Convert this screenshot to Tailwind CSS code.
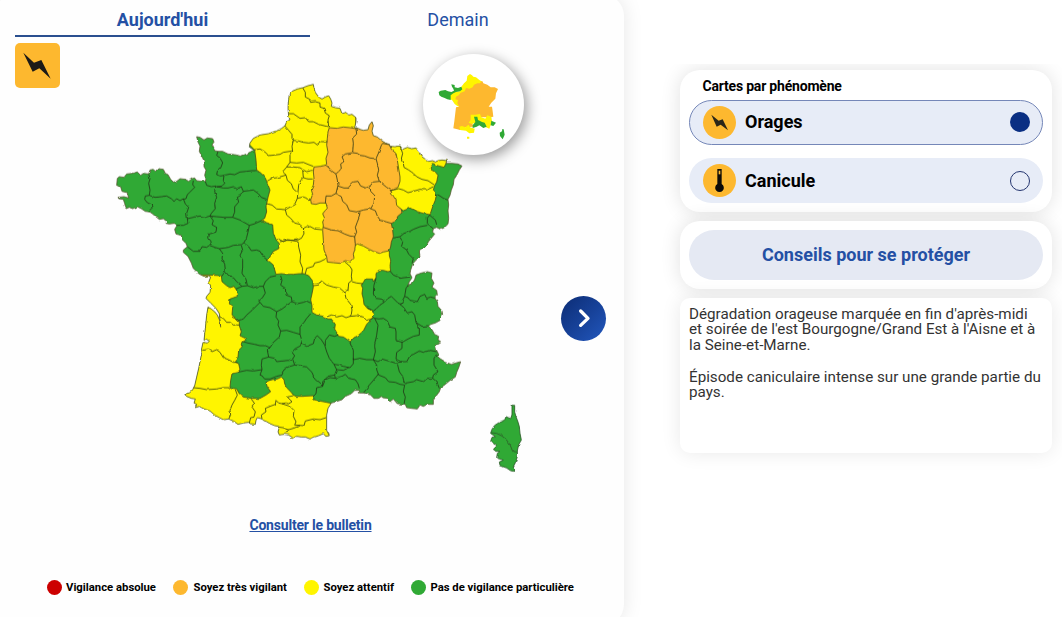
<!DOCTYPE html>
<html lang="fr">
<head>
    <meta charset="UTF-8">
    <meta name="viewport" content="width=device-width, initial-scale=1.0">
    <title>Vigilance météo</title>
    <script src="https://cdn.jsdelivr.net/npm/@tailwindcss/browser@4"></script>
</head>
<body class="flex h-[617px] items-start overflow-hidden bg-white font-[Roboto,sans-serif] text-black">

    <!-- Map card -->
    <section class="relative -mt-1.5 -ml-1.5 flex h-[632px] w-[630px] shrink-0 flex-col rounded-[22px] bg-[#fefefe] pt-1.5 pr-[18px] pl-[21px] shadow-[0_0_20px_rgba(0,0,0,0.1)]">
        <div class="flex h-[37px] text-lg leading-[39px] text-[#2450a4]">
            <button class="w-[295px] border-b-2 border-[#2a4f8f] text-center font-bold">Aujourd'hui</button>
            <button class="w-[296px] text-center">Demain</button>
        </div>

        <div class="mt-1.5 flex h-[462px] items-start">
            <span class="size-[45px] shrink-0 rounded-[5px] bg-[#fdb82f]">
                <svg class="size-full" viewBox="0 0 135 135"><path d="M25 29 57 59 79 51 107 107 73 76 53 86Z" fill="#1c1a17"/></svg>
            </span>
            <svg class="mt-8 ml-10 h-[405px] w-[440px] shrink-0" viewBox="0 0 1320 1215" fill="none" stroke-linejoin="round">
                <defs>
                    <!-- roughens coasts and borders a little -->
                    <filter id="rough" filterUnits="userSpaceOnUse" x="0" y="0" width="1320" height="1215" color-interpolation-filters="sRGB">
                        <feTurbulence type="fractalNoise" baseFrequency="0.06" numOctaves="1" seed="4"/>
                        <feDisplacementMap in="SourceGraphic" scale="8" xChannelSelector="R" yChannelSelector="G"/>
                    </filter>
                    <path id="france" d="M52 310 58 305 72 307 80 297 96 295 112 291 122 301 130 295 146 297 150 285 160 283 166 289 174 281 190 283 196 295 204 299 212 313 220 321 230 319 240 311 256 313 266 319 276 311 284 309 290 317 304 319 316 319 318 311 314 301 318 285 312 275 312 257 306 245 298 229 300 213 294 201 290 185 300 187 312 195 322 189 338 191 342 201 336 209 344 227 354 229 368 229 384 237 404 239 424 243 440 237 458 227 464 225 462 225 448 216 450 204 460 190 480 180 505 176 530 168 545 160 555 152 560 140 570 134 566 124 564 100 565 80 568 58 578 48 592 42 608 38 624 32 640 28 642 40 646 52 656 66 666 72 676 66 686 62 692 72 696 84 694 94 706 98 720 100 726 116 738 112 746 120 756 118 768 128 768 140 764 158 776 162 790 166 804 164 808 150 816 140 820 152 816 168 820 182 832 186 844 196 856 204 868 208 870 214 885 215 900 213 908 223 922 217 935 221 948 219 958 231 964 243 976 253 986 259 998 257 1006 261 1014 257 1026 255 1040 257 1038 265 1056 265 1074 267 1086 273 1078 285 1070 301 1062 313 1060 329 1054 345 1050 361 1044 373 1046 389 1044 407 1046 429 1044 447 1034 457 1022 463 1010 457 1000 461 998 471 1004 477 996 487 986 499 978 513 966 523 958 529 960 545 946 557 938 567 932 585 930 596 936 608 928 620 924 630 936 626 944 614 948 600 964 594 982 590 996 594 994 610 1002 624 996 636 1010 646 1012 660 1004 668 1012 680 1014 694 1026 708 1028 720 1020 736 1006 744 992 748 986 754 996 764 1004 778 1016 784 1014 794 1022 800 1006 810 1010 826 1016 838 1010 842 1022 852 1038 862 1054 868 1074 862 1082 860 1076 878 1070 892 1066 906 1050 916 1036 928 1022 938 1018 950 1006 966 1000 976 1000 988 982 988 970 994 960 990 952 1002 934 1000 920 998 916 988 892 986 880 972 870 980 862 970 848 968 844 964 836 970 822 970 812 960 798 956 790 954 778 954 778 946 764 946 754 956 736 964 726 974 708 980 694 984 684 1000 680 1020 680 1040 680 1066 688 1082 678 1084 670 1076 656 1082 644 1086 630 1092 616 1086 604 1086 590 1084 580 1090 566 1080 552 1078 538 1080 534 1070 538 1058 536 1054 524 1052 510 1046 500 1040 490 1036 486 1032 472 1028 468 1036 466 1048 450 1046 446 1042 430 1044 414 1048 400 1038 386 1032 370 1034 358 1028 344 1020 330 1008 312 1002 298 994 286 998 290 988 282 984 286 972 274 970 260 964 254 958 268 954 278 944 284 932 296 880 306 830 312 802 322 804 328 798 318 792 312 796 316 760 320 720 324 696 334 702 344 710 352 720 360 738 362 756 360 738 358 716 348 700 332 684 318 670 320 664 330 652 332 632 326 622 332 606 324 602 312 604 296 596 280 580 274 564 264 544 250 532 250 525 262 515 258 505 246 493 244 481 228 477 224 463 230 453 222 445 208 447 198 445 200 439 190 431 178 433 168 425 158 417 150 411 136 409 124 401 112 395 98 401 88 397 78 401 74 385 70 373 56 371 54 367 72 365 86 369 82 353 66 349 62 335 50 331Z"/>
                    <clipPath id="coast"><use href="#france"/></clipPath>
                </defs>
                <g filter="url(#rough)">
                    <use href="#france" fill="#30a935"/>
                    <!-- vigilance zones -->
                    <g clip-path="url(#coast)" stroke="#4a4a16" stroke-width="2.4">
                        <path fill="#fff500" d="M464 225 468 255 470 285 484 295 496 309 500 319 510 345 504 367 498 395 500 410 494 430 484 437 500 443 518 449 520 475 530 497 538 505 536 521 520 529 510 545 504 556 520 570 528 598 544 596 560 598 580 598 598 596 612 596 626 602 638 618 640 636 636 656 632 674 636 692 636 712 650 720 670 724 684 732 694 732 706 748 704 762 712 776 716 784 730 786 742 794 750 800 762 788 774 782 790 768 800 748 818 728 824 718 814 706 802 700 792 688 790 672 786 656 788 640 784 630 790 622 796 612 818 612 820 620 828 608 828 596 836 586 850 586 864 590 872 588 870 574 872 556 868 542 868 526 768 300 768 100 640 0 540 20 420 180Z"/>
                        <path fill="#fff500" d="M870 190 1040 240 1040 262 1032 277 1010 271 998 265 990 275 994 285 1006 291 1014 301 1010 321 1004 331 1000 345 1010 355 1006 375 998 395 990 419 970 415 950 409 930 399 910 407 904 403 860 380 860 300Z"/>
                        <path fill="#fff500" d="M326 600 364 602 366 620 380 632 390 638 402 634 410 646 412 664 390 672 388 686 398 696 396 720 410 732 418 742 418 752 424 770 420 782 440 792 428 802 426 816 416 826 414 846 404 860 416 866 420 884 412 892 396 896 392 916 390 936 400 940 410 942 418 956 430 966 454 970 480 970 498 960 512 950 502 936 498 922 516 914 532 912 544 906 552 914 554 926 560 938 574 952 580 960 588 964 606 964 640 962 642 974 660 978 680 982 700 986 720 1120 220 1120 220 900 300 600Z"/>
                        <path fill="#fdb82f" d="M688 158 710 160 730 156 750 158 768 161 770 100 850 130 870 213 874 223 888 235 892 255 896 281 900 305 900 319 894 337 872 347 880 363 888 375 890 391 904 403 906 413 892 425 892 437 874 445 878 465 880 485 874 501 872 515 868 527 850 531 838 535 820 529 808 523 790 513 772 507 766 511 764 525 760 537 762 549 752 561 736 557 720 565 700 563 682 561 680 545 672 525 670 495 668 465 670 452 668 440 674 430 668 416 676 406 682 400 678 384 660 384 648 388 634 386 632 374 638 358 634 344 640 330 642 310 640 290 642 276 660 274 676 270 680 268 678 250 684 232 680 210 682 190 684 170Z"/>
                    </g>
                    <!-- department borders -->
                    <g stroke="#1f2d14" stroke-opacity=".8" stroke-width="2.8">
                        <path transform="translate(0 105)" d="M146 192 150 206 146 220 150 240 148 256 136 258 134 268 142 278 154 284 156 294 148 302M148 256 165 262 185 260 200 258 214 266 222 274 230 266 240 272 250 266 256 282 266 292 260 310 262 326 264 340 250 346 230 346M280 212 278 224 284 232 270 246 262 254 258 266 250 268M316 214 320 226 334 230 348 228 344 244 350 262 344 280 346 296 334 310 330 318 316 322 300 318 280 322 262 326M354 124 350 136 360 144 368 158 362 174 352 184 350 194 362 198 372 196 370 210 374 220 366 228 350 230 370 234 384 234 400 230 410 236 424 230 430 244 444 242 460 240 474 250 484 262 500 268M372 196 390 192 404 194 420 186 440 184 456 182 470 182M430 244 422 256 412 262 416 276 404 290 404 306 398 322 372 322 350 320 330 318 340 332 336 344 350 352 348 366 328 372 326 384 334 396 328 406 320 412 306 410 300 424 280 424 262 410M398 322 420 330 434 338 448 346 462 342 484 332M328 406 345 412 358 416 385 412 400 406 424 404 432 398 440 382 444 366 448 346M358 416 368 430 366 446 374 462 376 480 374 486 366 498M424 406 428 420 420 436 428 450 428 470 426 490 438 508 442 526M432 400 446 410 454 422 470 420 480 424 490 440 504 452"/>
                        <path transform="translate(240 480)" d="M134 108 150 126 160 128 172 142 186 154 202 152 220 158 236 154 250 154 256 140 270 126 288 122M168 162 186 154M156 246 176 256 190 252 200 240 216 226 230 212 240 202 236 198 246 190 256 174 250 154M302 122 306 136 302 150 316 160 318 180 334 186 336 200 322 210 306 222 290 230 270 218 250 214 240 202M336 200 352 206 370 202 380 198 392 204M290 230 288 246 296 258 294 270 302 288 320 286 340 292 360 298 360 276 372 262 380 250 392 236M204 324 224 328 240 332 256 332 270 338 280 322 298 306 302 288M204 324 190 320M270 338 262 346 266 366 284 370 290 380 306 378 326 376 338 372 344 362 336 352 344 342 362 332 366 318 360 298M266 366 246 372 244 390 246 404 220 408 200 406 172 412M246 404 240 420 246 422 254 432 270 432 290 424 306 420 312 404 324 396 344 390 360 392 380 396 396 412 404 432 420 446 428 454 410 458 408 476 400 484M338 372 344 390M362 326 380 334 400 326 404 310 412 302 424 314 434 330 440 350 448 370 462 388 470 404 464 420 444 424 428 440 428 454"/>
                        <path transform="translate(240 480)" d="M296 12 310 20 322 14 336 16 354 20 356 36 362 60 360 80 368 100 366 116M376 116 380 100 400 94 404 84 420 80 436 72M400 152 416 150 424 138 440 150 460 156 480 160M118 244 130 250 140 262 150 262 160 270 178 270M70 346 86 342 96 350 110 344 120 352 130 368 146 374 160 382 172 382M40 458 60 460 80 464 110 462 130 458 150 458M166 464 172 480 164 496 156 510 150 526 152 540 146 552M214 492 224 506 216 516 226 530 222 546 212 548 208 564M246 552 244 540 258 530 256 520 270 514 286 508 288 496 296 504 306 506 316 504 326 506 336 500 322 486 340 482M306 506 330 514 342 526 340 544 348 560 344 570 372 572 376 558 400 552 420 554 438 548M298 576 312 578 326 584 340 580 360 572M318 594 326 584"/>
                        <path transform="translate(630 480)" d="M240 108 250 120 264 126 270 130 282 128 300 126M198 130 192 150 190 176 196 190 214 192 222 202 210 210 198 222 190 228 172 218M222 202 234 190 244 184 250 190 264 204 272 208 284 184 288 160 296 148M270 208 280 216 292 234 306 230 314 240 318 262 328 280 328 300 310 304 294 312 276 322 258 316 258 290 256 280 240 276 232 258 220 250 208 252 194 250 188 246M284 184 294 188 300 196 322 200 330 184 344 178 350 190 362 186 376 190M318 262 336 274 356 272M194 250 204 270 200 300 194 330 196 350 190 374 170 374 150 370 130 374 130 346 120 320M46 332 46 316 58 300 74 304 84 300M72 388 86 390 100 394 120 398 130 386 130 370M276 322 276 340 260 352 258 372 270 380 290 380 300 362 310 358 328 348 340 352 360 346 380 350M190 374 204 380 216 372 236 378 256 384 276 380M190 374 200 390 200 404 206 420 226 428 236 440 256 442 270 448 284 450M262 386 268 410 278 424 282 440 288 448M80 404 100 406 116 398M74 420 76 430 96 424 106 418 116 430 136 434 144 446 148 460M206 416 190 436 178 450 170 462 160 474M284 450 280 470 286 486 282 508M288 444 310 440 320 434 340 440 352 430 368 430 370 420 384 410 372 390 372 370 380 358M368 430 380 440 388 460M38 452 46 434 60 428 76 430"/>
                        <path transform="translate(630 480)" d="M104 80 120 94 126 104 124 124 126 136 116 144 114 168 104 172M90 160 104 172 108 190 122 208 126 224 124 238 120 244M54 244 64 240 80 246 96 242 108 248 120 244 140 242 160 246 170 256 188 250M126 140 140 144 158 146"/>
                        <path transform="translate(660 105)" d="M108 56 110 72 98 84 100 100 98 128 112 130 120 136 134 138 150 144 168 146 176 128 184 106 188 100 208 104M168 146 172 160 176 180 172 196 178 214 160 216 150 228 138 234 122 228 114 214 100 216 84 234 72 234 54 228M98 128 76 132 66 140 72 154 62 162 64 176 56 184 48 192 34 182 24 170 14 166M48 192 52 210 54 226 48 250 64 260 68 274 80 284 88 302 110 306 130 300 152 296 162 280 164 256 152 244 150 228M152 296 166 302 172 318 180 330 200 336 214 340M120 306 118 320 112 336 106 352 110 366 104 380 90 378 74 372 54 362 34 360 10 352M104 380 106 406M48 250 34 258 18 258 16 280M178 214 200 232 214 242M240 108 248 130 244 146 250 160 252 172 266 180 280 190 290 200 306 208 324 212 342 224M212 242 236 236 250 240 264 248 280 244 300 238 320 240 340 230M346 250 360 258 372 266 384 270M330 314 322 324 322 340 330 348 340 356M330 316 346 330 350 344M220 384 240 380 252 370 266 366 280 358 300 350 322 346M240 382 248 394 244 408 260 420 266 432 280 446 276 460"/>
                        <path transform="translate(420)" d="M188 38 196 52 196 66 208 72 212 82 226 80 240 84 240 96 252 100 256 114 268 122 264 134 266 156 252 152 236 148 220 140 206 140 196 128 180 130 160 116 146 116M134 152 146 166 156 178 156 190 160 196 176 198 190 202 206 204 222 202 232 210 244 200 262 200M160 196 156 214 158 230 150 240 150 262 170 264 190 262 204 268 220 274M44 224 60 222 74 230 86 242 104 240 120 238 130 232 156 228M150 262 140 276 128 290 138 300 112 308 96 310 82 318M140 276 160 276 180 278 188 284 200 290 218 286M188 284 190 308 204 312 218 312M190 308 182 316 176 330 172 370 190 366 212 374M138 300 142 316 154 326 160 342 170 350M80 386 96 390 110 402 136 404 150 396 164 388 172 370M136 404 140 420 152 430 164 444 180 448 190 460 206 452 224 462 246 464M190 460 192 476 184 490 164 496 140 496 120 500"/>
                    </g>
                    <use href="#france" stroke="#55552f" stroke-width="2.4"/>
                    <g transform="translate(1140 615)" stroke="#2c5a28" stroke-width="2.6">
                        <path fill="#30a935" d="M96 376 104 376 104 396 108 410 114 426 118 440 120 460 124 480 116 494 112 512 112 530 106 548 100 560 102 574 92 572 80 564 60 556 58 546 70 540 50 534 52 520 60 514 48 514 40 508 50 498 40 490 32 484 36 472 46 470 32 460 36 448 44 436 60 426 74 420 78 410 92 416 96 404Z"/>
                        <path d="M32 458 50 460 66 468 78 478 90 494 98 514 110 516"/>
                    </g>
                </g>
            </svg>
        </div>

        <a href="#" class="mt-2.5 self-center text-sm leading-5 font-bold tracking-[-0.2px] text-[#2450a4] underline">Consulter le bulletin</a>

        <ul class="mt-[42px] ml-8 flex items-center text-[11.3px] leading-[21px] font-bold whitespace-nowrap">
            <li class="mr-[17.500px] flex items-center gap-1"><i class="size-[15px] rounded-full bg-[#cc0000]"></i>Vigilance absolue</li>
            <li class="mr-[17.500px] flex items-center gap-[5px]"><i class="size-[15px] rounded-full bg-[#fdb82f]"></i>Soyez très vigilant</li>
            <li class="mr-[17.500px] flex items-center gap-1"><i class="size-[15px] rounded-full bg-[#fff500]"></i>Soyez attentif</li>
            <li class="flex items-center gap-1"><i class="size-[15px] rounded-full bg-[#30a935]"></i>Pas de vigilance particulière</li>
        </ul>

        <!-- Tomorrow preview, floats over the map -->
        <div class="absolute top-[60px] left-[429px] size-[101px] rounded-full bg-white shadow-[3px_4px_14px_rgba(0,0,0,0.4)]">
            <svg class="size-full" viewBox="69 162 303 303">
                <path fill="#fff500" d="M150 282 160 276 180 274 184 260 192 250 200 242 202 228 210 222 216 226 220 230 228 232 238 240 248 246 240 300 180 322 172 318 164 312 156 300 150 298Z"/>
                <path fill="#30a935" d="M116 276 122 272 136 270 144 274 154 276 162 272 160 266 156 260 154 253 164 255 164 262 174 264 184 260 187 268 180 274 168 276 160 280 152 286 152 300 142 298 134 294 124 290 118 286Z"/>
                <path fill="#fdb82f" d="M168 290 176 286 182 278 194 274 198 264 208 266 218 262 222 254 232 250 240 250 246 242 250 250 262 254 272 262 284 262 294 267 288 280 286 296 274 308 266 320 276 320 278 334 280 350 270 352 240 352 216 366 220 380 196 382 180 390 172 388 160 385 163 364 166 338 168 322 178 320 172 310 174 300 166 298Z"/>
                <path fill="#fff500" d="M212 344 226 344 240 342 244 352 256 356 262 346 274 350 276 364 272 376 268 386 258 382 248 374 232 366 216 372 206 368 212 360ZM178 380 186 378 196 382 206 374 210 382 224 386 222 398 208 400 198 392 180 390ZM201 410h7v6h-7Z"/>
                <path fill="#30a935" d="M222 350 232 350 234 360 246 366 254 368 260 380 250 384 238 376 230 380 218 384 218 376 226 366ZM274 362 288 368 280 378 272 376ZM307 387 311 388 314 404 308 418 300 408 299 398 306 394Z"/>
            </svg>
        </div>

        <button class="absolute top-[302px] left-[567px] flex size-[45px] items-center justify-center rounded-full bg-linear-to-br from-[#0c2c74] to-[#2257bd]">
            <svg class="size-[45px]" viewBox="0 0 135 135" fill="none" stroke="#fff" stroke-width="10" stroke-linecap="round" stroke-linejoin="round"><path d="M59 45 81 67 59 88"/></svg>
        </button>
    </section>

    <!-- Side column -->
    <aside class="mt-16 ml-[26px] flex h-[553px] w-[412px] shrink-0 flex-col gap-[9px] overflow-hidden pt-1.5 pr-[10px] pl-[30px]">
        <section class="h-[142px] w-[372px] shrink-0 rounded-[20px] bg-white px-[9px] pt-1.5 shadow-[0_0_20px_rgba(0,0,0,0.12)]">
            <h2 class="pl-[13.500px] text-sm leading-5 font-bold tracking-[-0.2px]">Cartes par phénomène</h2>
            <div class="mt-1 flex flex-col gap-[13px] text-lg font-bold">
                <div class="flex h-[45px] items-center rounded-full border border-[#7587b8] bg-[#e7ecf7] px-[13px] pb-px">
                    <svg class="size-[33px]" viewBox="0 0 99 99"><circle cx="49.500" cy="49.500" r="49.500" fill="#fdb82f"/><path d="M25 26 47 44 59 40 75 73 53 56 41 62Z" fill="#2b2618"/></svg>
                    <span class="ml-[9px] grow leading-none">Orages</span>
                    <i class="mr-[-1px] size-5 rounded-full bg-[#0a2f83]"></i>
                </div>
                <div class="flex h-[45px] items-center rounded-full bg-[#e7ecf7] px-[14px]">
                    <svg class="size-[33px]" viewBox="0 0 99 99"><circle cx="49.500" cy="49.500" r="49.500" fill="#fdb82f"/><path d="M43 15h13v45a13 13 0 1 1-13 0Z" fill="#0d0b08"/><path d="M47 20h5v11h-5Z" fill="#fdb82f"/></svg>
                    <span class="ml-[9px] grow leading-none">Canicule</span>
                    <i class="mr-[-1px] size-5 rounded-full border border-[#24356f]"></i>
                </div>
            </div>
        </section>

        <section class="h-[68px] w-[372px] shrink-0 rounded-[20px] bg-white p-[9px] shadow-[0_0_20px_rgba(0,0,0,0.12)]">
            <button class="h-[50px] w-full rounded-full bg-[#e5e9f3] text-lg font-bold text-[#2450a4]">Conseils pour se protéger</button>
        </section>

        <section class="h-[155px] w-[372px] shrink-0 rounded-[10px] bg-white px-[9px] pt-[8.6px] text-[15.2px] leading-[15.7px] whitespace-nowrap text-[#333] shadow-[0_0_20px_rgba(0,0,0,0.09)]">
            <p>Dégradation orageuse marquée en fin d'après-midi<br>et soirée de l'est Bourgogne/Grand Est à l'Aisne et à<br>la Seine-et-Marne.</p>
            <p class="mt-4">Épisode caniculaire intense sur une grande partie du<br>pays.</p>
        </section>
    </aside>
</body>
</html>
